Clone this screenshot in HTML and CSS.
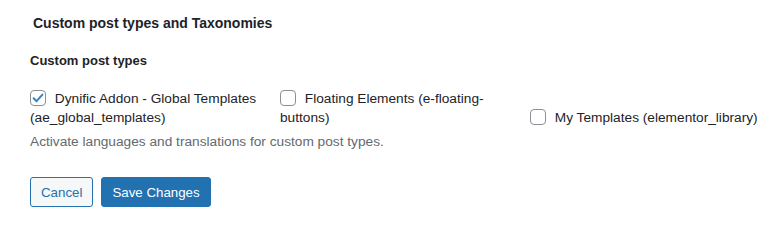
FILE: index.html
```html
<!DOCTYPE html>
<html lang="en">
<head>
    <meta charset="UTF-8" />
    <title>Custom post types and Taxonomies</title>
    <link rel="stylesheet" href="styles.css">
</head>
<body>
    <div class="panel">
        <h2 class="panel-title">Custom post types and Taxonomies</h2>

        <h3 class="section-title">Custom post types</h3>
        <div class="cpt-list">
            <label class="cpt-item">
                <span class="box checked">
                    <svg viewBox="0 0 16 16" width="16" height="16"><path d="M3.6 8.2 L6.6 11.2 L12.4 4.6" fill="none" stroke="#3582c4" stroke-width="2" stroke-linecap="round" stroke-linejoin="round"/></svg>
                </span>
                Dynific Addon - Global Templates (ae_global_templates)
            </label><label class="cpt-item">
                <span class="box"></span>
                Floating Elements (e-floating-buttons)
            </label><label class="cpt-item">
                <span class="box"></span>
                My Templates (elementor_library)
            </label>
        </div>
        <p class="description">Activate languages and translations for custom post types.</p>

        <div class="actions">
            <button class="btn btn-secondary">Cancel</button>
            <button class="btn btn-primary">Save Changes</button>
        </div>
    </div>
</body>
</html>
```

FILE: styles.css
```css
body {
    margin: 0;
    background: #fff;
    font-family: "Liberation Sans", Arial, sans-serif;
    font-size: 13.7px;
    color: #1d2327;
}

.panel {
    padding: 14px 0 0 30px;
}

.panel-title {
    font-size: 14px;
    font-weight: bold;
    margin: 0 0 0 3px;
    line-height: 18px;
}

.section-title {
    font-size: 13px;
    font-weight: bold;
    margin: 20px 0 0 0;
    line-height: 18px;
}

.cpt-list {
    margin-top: 19px;
    font-size: 0;
    white-space: nowrap;
}

.cpt-item {
    display: inline-block;
    width: 250px;
    padding-right: 20px;
    box-sizing: border-box;
    font-size: 13.7px;
    line-height: 19px;
    vertical-align: baseline;
    white-space: normal;
}

.box {
    display: inline-block;
    width: 16px;
    height: 16px;
    border: 1px solid #8c8f94;
    border-radius: 4px;
    box-sizing: border-box;
    vertical-align: -3px;
    margin-right: 5px;
    position: relative;
}

.box svg {
    position: absolute;
    left: -1px;
    top: -1px;
}

.description {
    color: #646970;
    margin: 5px 0 0 0;
    line-height: 20px;
}

.actions {
    margin-top: 25px;
    display: flex;
    gap: 8px;
}

.btn {
    font-family: inherit;
    font-size: 13.3px;
    height: 30px;
    padding: 0 10px;
    border-radius: 3px;
    border: 1px solid #2271b1;
    cursor: pointer;
}

.btn-secondary {
    background: #f6f7f7;
    color: #2271b1;
}

.btn-primary {
    background: #2271b1;
    color: #fff;
}
```
